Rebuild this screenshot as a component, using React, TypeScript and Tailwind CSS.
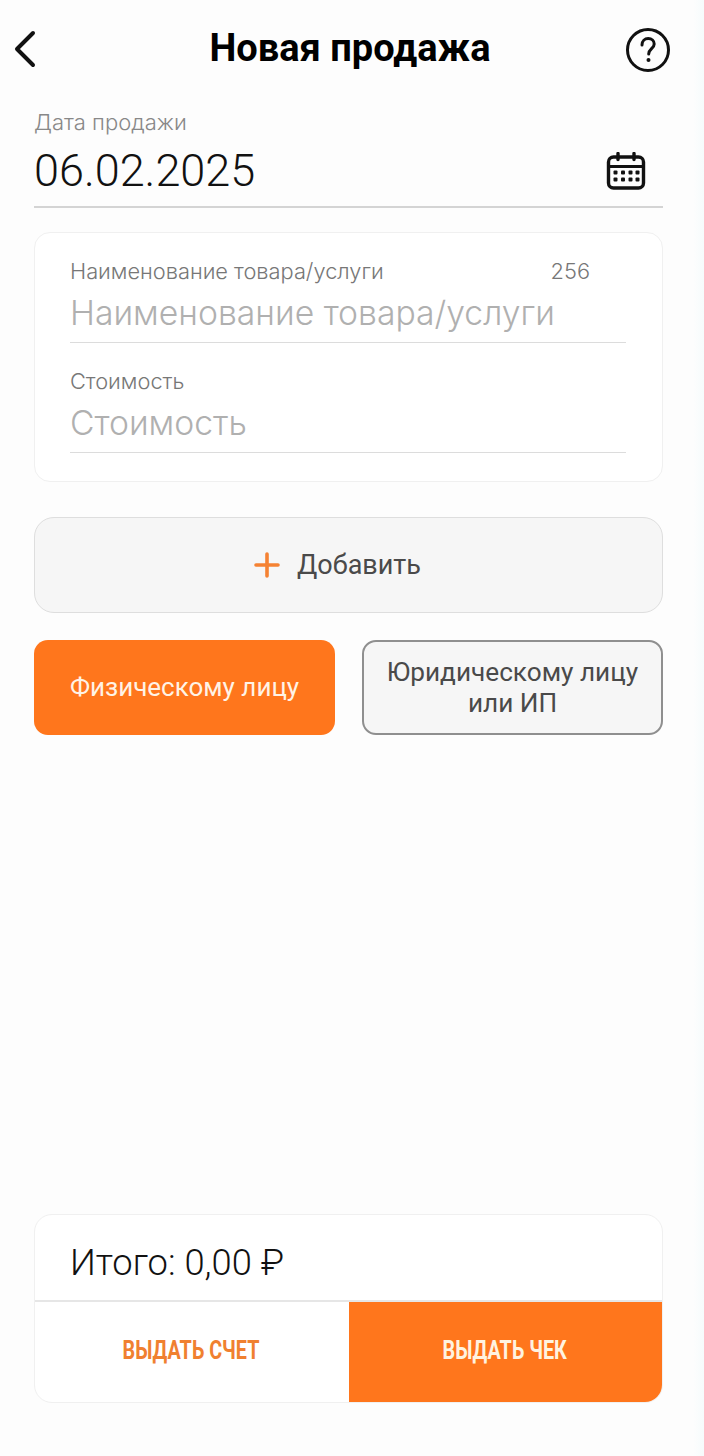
const sans = "font-['Roboto','Liberation_Sans',sans-serif]";
const inter = "font-['Inter','Liberation_Sans',sans-serif]";

function Calendar() {
  return (
    <svg width="40" height="38" viewBox="0 0 40 38" fill="none">
      <rect x="2.5" y="5" width="35" height="31" rx="5" stroke="#111" strokeWidth="3.4" />
      <path d="M2.5 14.5h35" stroke="#111" strokeWidth="3" />
      <path d="M12 1.5v6M28 1.5v6" stroke="#111" strokeWidth="3.4" strokeLinecap="round" />
      <g fill="#111">
        {[9, 16.5, 24, 31].map((x) => (
          <g key={x}>
            <rect x={x - 1.5} y="18.5" width="4" height="4" rx="1" />
            <rect x={x - 1.5} y="25.5" width="4" height="4" rx="1" />
          </g>
        ))}
      </g>
    </svg>
  );
}

function Field({ label, placeholder, counter }: { label: string; placeholder: string; counter?: string }) {
  return (
    <div className={`${inter} border-b border-[#dcdcdc] pb-[7px]`}>
      <div className="flex h-[24px] items-center justify-between pr-[36px] text-[21.8px] font-light leading-[24px] text-[#777]">
        <span>{label}</span>
        {counter && <span>{counter}</span>}
      </div>
      <div className="mt-[8px] h-[44px] text-[33.7px] font-light leading-[44px] text-[#b0b0b0]">{placeholder}</div>
    </div>
  );
}

export default function App() {
  return (
    <div className={`${sans} flex h-[1456px] w-[704px] flex-col overflow-hidden bg-[linear-gradient(to_right,#fdfdfd_98.5%,#f6fbfc_100%)] pl-[34px] pr-[41px]`}>
      <header className="relative flex h-[98px] shrink-0 items-center justify-center pb-[2px]">
        <svg className="absolute left-[-22px] top-[30px]" width="28" height="38" viewBox="0 0 28 38" fill="none">
          <path d="M21 3 5 19l16 16" stroke="#111" strokeWidth="4" strokeLinecap="round" strokeLinejoin="round" />
        </svg>
        <h1 className="ml-[3px] text-[38px] font-bold leading-[44px] text-black">Новая продажа</h1>
        <svg className="absolute right-[-8px] top-[27px]" width="46" height="46" viewBox="0 0 46 46" fill="none">
          <circle cx="23" cy="23" r="20.5" stroke="#111" strokeWidth="3" />
          <path d="M17 18c0-4 2.8-6.5 6.2-6.5 3.500 0 6 2.300 6 5.500 0 4.500-5.500 5-5.500 10" stroke="#111" strokeWidth="3" strokeLinecap="round" />
          <circle cx="23.500" cy="33" r="2" fill="#111" />
        </svg>
      </header>

      <section className="h-[110px] shrink-0 border-b-2 border-[#d4d4d4]">
        <div className={`${inter} flex h-[38px] items-end text-[22px] font-light leading-[28px] text-[#888]`}>Дата продажи</div>
        <div className="mt-[10px] flex items-center justify-between pr-[17px]">
          <span className="text-[45px] font-light leading-[50px] text-[#111]">06.02.2025</span>
          <Calendar />
        </div>
      </section>

      <section className="mt-[24px] flex h-[250px] shrink-0 flex-col gap-[26px] rounded-[16px] border border-[#f0f0f0] bg-white pl-[35px] pr-[36px] pt-[26px]">
        <Field label="Наименование товара/услуги" placeholder="Наименование товара/услуги" counter="256" />
        <Field label="Стоимость" placeholder="Стоимость" />
      </section>

      <button className="mt-[35px] flex h-[96px] shrink-0 items-center justify-center gap-[17px] rounded-[20px] border border-[#dedede] bg-[#f6f6f6] pr-[22px] text-[27px] text-[#4a4a4a]">
        <svg width="26" height="26" viewBox="0 0 26 26" fill="none">
          <path d="M13 2v22M2 13h22" stroke="#f58233" strokeWidth="3.6" strokeLinecap="round" />
        </svg>
        Добавить
      </button>

      <div className="mt-[27px] grid h-[95px] shrink-0 grid-cols-[301px_301px] justify-between">
        <button className="rounded-[14px] bg-[#ff761c] text-[26px] text-[#fff3e6]">Физическому лицу</button>
        <button className="rounded-[14px] border-2 border-[#8f8f8f] bg-[#f6f6f6] text-[26.2px] leading-[31px] text-[#4a4a4a]">
          Юридическому лицу
          <br />
          или ИП
        </button>
      </div>

      <section className="mt-[479px] h-[189px] shrink-0 overflow-hidden rounded-[18px] border border-[#f0f0f0] bg-white">
        <div className="flex h-[87px] items-center border-b-2 border-[#e6e6e6] pl-[35px] pt-[12px] text-[36.3px] font-light text-[#111]">Итого: 0,00 ₽</div>
        <div className="grid h-[100px] grid-cols-2 text-[26px] font-bold">
          <button className="pb-[4px] pr-[2px] text-[#f08030]"><span className="inline-block scale-x-[0.76]">ВЫДАТЬ СЧЕТ</span></button>
          <button className="bg-[#ff761c] pb-[4px] pr-[2px] text-[#fff3e0]"><span className="inline-block scale-x-[0.76]">ВЫДАТЬ ЧЕК</span></button>
        </div>
      </section>
    </div>
  );
}
